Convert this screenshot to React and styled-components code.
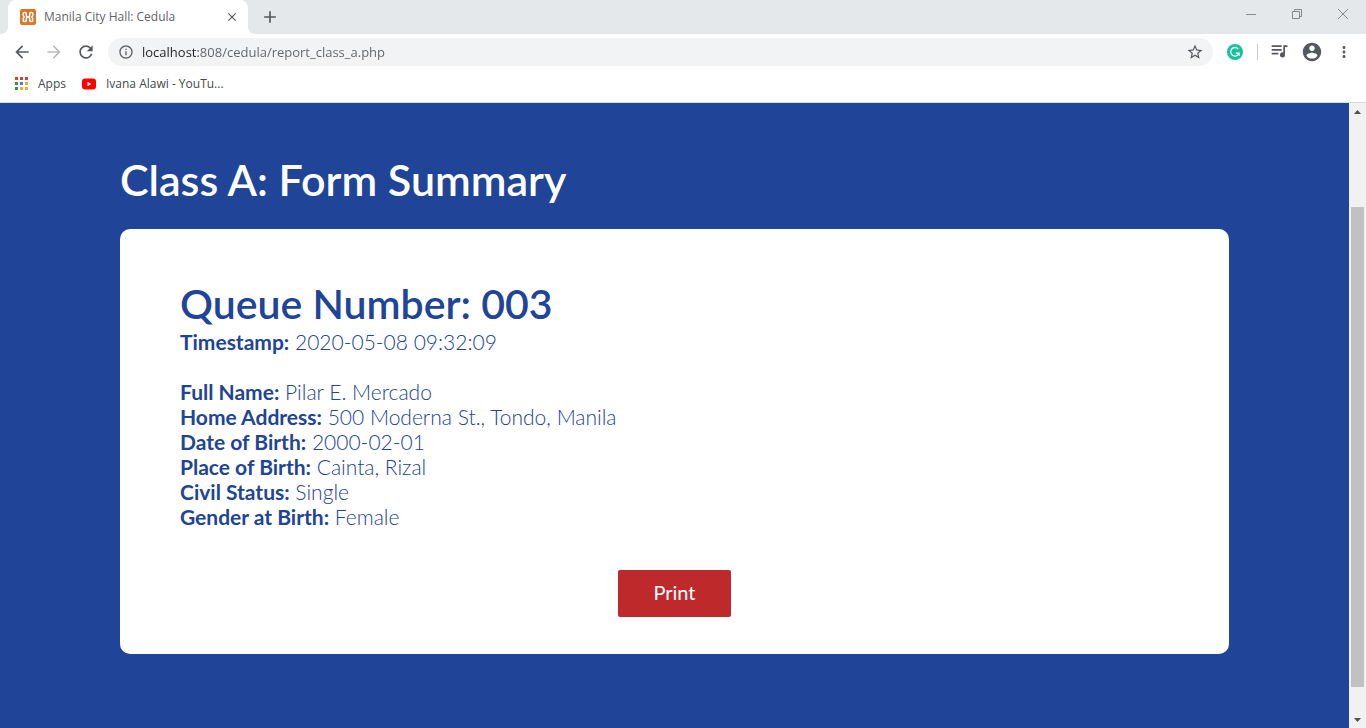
import React from "react";
import styled, { createGlobalStyle } from "styled-components";
import {
  MdArrowBack,
  MdArrowForward,
  MdRefresh,
  MdInfoOutline,
  MdStarBorder,
  MdMoreVert,
  MdClose,
  MdAdd,
} from "react-icons/md";

const GlobalStyle = createGlobalStyle`
  *, *::before, *::after { box-sizing: border-box; }
  body { margin: 0; }
  button { border: 0; padding: 0; background: none; font: inherit; color: inherit; cursor: pointer; }
`;

const Browser = styled.div`
  display: flex;
  flex-direction: column;
  min-height: 100vh;
  background: #fff;
  color: #5f6368;
  font: 12px/16px "Open Sans", "Noto Sans", sans-serif;
`;

const TabStrip = styled.div`
  display: flex;
  align-items: center;
  height: 34px;
  padding-left: 8px;
  background: #e5e8eb;
`;

const Tab = styled.div`
  position: relative;
  display: flex;
  align-items: center;
  width: 240px;
  height: 34px;
  padding: 0 9px 0 12px;
  background: #fff;
  border-radius: 8px 8px 0 0;

  &::before,
  &::after {
    content: "";
    position: absolute;
    bottom: 0;
    width: 8px;
    height: 8px;
  }
  &::before {
    right: 100%;
    background: radial-gradient(circle at 0 0, transparent 8px, #fff 8px);
  }
  &::after {
    left: 100%;
    background: radial-gradient(circle at 100% 0, transparent 8px, #fff 8px);
  }
`;

const TabTitle = styled.span`
  flex: 1;
  margin-left: 8px;
  white-space: nowrap;
`;

const IconButton = styled.button`
  display: flex;
  align-items: center;
  justify-content: center;
  flex: none;
  width: ${(p) => p.$width || 32}px;
  height: ${(p) => p.$height || 32}px;
  color: ${(p) => p.$color || "#55585c"};
`;

const WindowControls = styled.div`
  display: flex;
  height: 34px;
  margin-left: auto;
`;

const Toolbar = styled.div`
  display: flex;
  align-items: center;
  height: 36px;
  padding: 0 6px;
`;

const AddressBar = styled.label`
  display: flex;
  align-items: center;
  flex: 1;
  height: 28px;
  margin: 0 6px;
  padding: 0 2px 0 10px;
  border-radius: 14px;
  background: #f1f3f4;
`;

const AddressInput = styled.input`
  flex: 1;
  min-width: 0;
  height: 20px;
  margin-left: 8px;
  padding: 0;
  border: 0;
  outline: 0;
  font: 13px/20px "Open Sans", "Noto Sans", sans-serif;
  color: #5f6368;
  background: linear-gradient(to right, #202124 56px, #5f6368 56px);
  background-clip: text;
  -webkit-text-fill-color: transparent;
`;

const Divider = styled.span`
  width: 1px;
  height: 16px;
  margin: 0 6px;
  background: #c8cacd;
`;

const Bookmarks = styled.nav`
  display: flex;
  align-items: center;
  gap: 16px;
  height: 33px;
  padding: 0 14px 4px;
  border-bottom: 1px solid #d5dae3;
`;

const Bookmark = styled.a`
  display: flex;
  align-items: center;
  gap: 8px;
  color: #45484c;
  text-decoration: none;
`;

const Viewport = styled.div`
  display: flex;
  flex: 1;
`;

const Page = styled.main`
  flex: 1;
  padding: 52px 120px 60px;
  background: #204497;
  color: #204497;
  font-family: Lato, sans-serif;
`;

const Title = styled.h1`
  margin: 0 0 24px;
  color: #fff;
  font-size: 43px;
  line-height: 50px;
  font-weight: 600;
`;

const Card = styled.section`
  padding: 50px 60px 37px;
  border-radius: 10px;
  background: #fff;
`;

const Queue = styled.h2`
  margin: 0;
  font-size: 41px;
  line-height: 50px;
  font-weight: 600;
`;

const Field = styled.p`
  margin: 0;
  font-size: 21px;
  line-height: 25px;
  font-weight: 300;

  strong {
    font-weight: 700;
  }
`;

const Details = styled.div`
  margin: 25px 0 41px;
`;

const PrintButton = styled.button`
  && {
    display: block;
    margin: 0 auto;
    padding: 10px 35px 12px;
    border-radius: 2px;
    background: #be2a2b;
    color: #fff;
    font-size: 20px;
    line-height: 25px;
  }
`;

const Scrollbar = styled.div`
  display: flex;
  flex-direction: column;
  width: 17px;
  background: #f1f1f1;
`;

const Track = styled.div`
  display: flex;
  flex-direction: column;
  flex: 1;
  padding: 0 2px;

  &::before {
    content: "";
    flex: 87;
  }
  &::after {
    content: "";
    flex: 24;
  }
`;

const Thumb = styled.div`
  flex: 480;
  background: #c1c1c1;
`;

const FormIcon = () => (
  <svg width="16" height="16" viewBox="0 0 16 16" aria-hidden="true">
    <rect width="16" height="16" rx="2" fill="#e0742b" />
    <path
      d="M6.300 6.500V4.800Q6.300 3.600 5.100 3.600H4.400Q3.200 3.600 3.200 4.800V5.900Q3.200 7 4.300 8Q3.200 9 3.200 10.100V11.200Q3.200 12.400 4.400 12.400H5.100Q6.300 12.400 6.300 11.200V9.500Q6.300 8 8 8Q9.700 8 9.700 9.500V11.200Q9.700 12.400 10.900 12.400H11.600Q12.800 12.400 12.800 11.200V10.100Q12.800 9 11.700 8Q12.800 7 12.800 5.900V4.800Q12.800 3.600 11.600 3.600H10.900Q9.700 3.600 9.700 4.800V6.500Q9.700 8 8 8Q6.300 8 6.300 6.500Z"
      fill="none"
      stroke="#fff"
      strokeWidth="1.500"
      strokeLinejoin="round"
    />
  </svg>
);

const dots = ["#d93f35", "#d93f35", "#d93f35", "#35924a", "#3b7de0", "#e8b223", "#35924a", "#e8b223", "#e8b223"];
const AppsIcon = () => (
  <svg width="16" height="14" viewBox="0 0 16 14" aria-hidden="true">
    {dots.map((fill, i) => (
      <rect key={i} x={1 + (i % 3) * 5} y={(Math.floor(i / 3)) * 5} width="3" height="3" fill={fill} />
    ))}
  </svg>
);

const VideoIcon = () => (
  <svg width="16" height="16" viewBox="0 0 16 16" aria-hidden="true">
    <rect x="0" y="2.500" width="14" height="11" rx="3" fill="#f00" />
    <path d="M5.500 5.800v4.400L9.200 8Z" fill="#fff" />
  </svg>
);

const GrammarIcon = () => (
  <svg width="16" height="16" viewBox="0 0 16 16" aria-hidden="true">
    <circle cx="8" cy="8" r="8" fill="#15c39a" />
    <path d="M11.300 5.100A4.300 4.300 0 1 0 12 9.200H8.800M12.100 8.700v3" fill="none" stroke="#fff" strokeWidth="1.300" />
  </svg>
);

const QueueMusicIcon = () => (
  <svg width="20" height="20" viewBox="0 0 24 24" fill="currentColor" aria-hidden="true">
    <path d="M2 4h12v2H2ZM2 8.500h12v2H2ZM2 13h8v2H2ZM16 4h5v2h-3v9.500a3 3 0 1 1-2-2.830Z" />
  </svg>
);

const ProfileIcon = () => (
  <svg width="22" height="22" viewBox="0 0 24 24" fill="currentColor" aria-hidden="true">
    <path d="M12 2C6.480 2 2 6.480 2 12s4.480 10 10 10 10-4.480 10-10S17.520 2 12 2zm0 3c1.660 0 3 1.340 3 3s-1.340 3-3 3-3-1.340-3-3 1.340-3 3-3zm0 14.200c-2.500 0-4.710-1.280-6-3.220.03-1.990 4-3.080 6-3.080 1.990 0 5.970 1.090 6 3.080-1.290 1.940-3.500 3.220-6 3.220z" />
  </svg>
);

const WindowIcon = ({ d }) => (
  <svg width="12" height="12" viewBox="0 0 12 12" aria-hidden="true">
    <path d={d} fill="none" stroke="#85888c" />
  </svg>
);

const Arrow = ({ d }) => (
  <svg width="7" height="4" viewBox="0 0 7 4" aria-hidden="true">
    <path d={d} fill="#505050" />
  </svg>
);

const details = [
  ["Full Name", "Pilar E. Mercado"],
  ["Home Address", "500 Moderna St., Tondo, Manila"],
  ["Date of Birth", "2000-02-01"],
  ["Place of Birth", "Cainta, Rizal"],
  ["Civil Status", "Single"],
  ["Gender at Birth", "Female"],
];

export default function App() {
  return (
    <Browser>
      <GlobalStyle />
      <TabStrip>
        <Tab>
          <FormIcon />
          <TabTitle>Manila City Hall: Cedula</TabTitle>
          <IconButton aria-label="Close tab" $width={14}>
            <MdClose size={14} />
          </IconButton>
        </Tab>
        <IconButton aria-label="New tab" $width={44}>
          <MdAdd size={20} />
        </IconButton>
        <WindowControls>
          <IconButton aria-label="Minimize" $width={46} $height={28}>
            <WindowIcon d="M1 6.5h10" />
          </IconButton>
          <IconButton aria-label="Restore" $width={46} $height={28}>
            <WindowIcon d="M1.500 3.500h7v7h-7ZM3.500 3V1.500h7v7H9" />
          </IconButton>
          <IconButton aria-label="Close window" $width={46} $height={28}>
            <WindowIcon d="M1 1l10 10M11 1L1 11" />
          </IconButton>
        </WindowControls>
      </TabStrip>
      <Toolbar>
        <IconButton aria-label="Back"><MdArrowBack size={20} /></IconButton>
        <IconButton aria-label="Forward" $color="#babcbe"><MdArrowForward size={20} /></IconButton>
        <IconButton aria-label="Reload"><MdRefresh size={20} /></IconButton>
        <AddressBar>
          <MdInfoOutline size={16} />
          <AddressInput aria-label="Address" defaultValue="localhost:808/cedula/report_class_a.php" />
          <IconButton type="button" aria-label="Bookmark this page">
            <MdStarBorder size={18} />
          </IconButton>
        </AddressBar>
        <IconButton aria-label="Writing assistant"><GrammarIcon /></IconButton>
        <Divider />
        <IconButton aria-label="Media controls"><QueueMusicIcon /></IconButton>
        <IconButton aria-label="Profile"><ProfileIcon /></IconButton>
        <IconButton aria-label="Menu"><MdMoreVert size={18} /></IconButton>
      </Toolbar>
      <Bookmarks>
        <Bookmark href="#apps"><AppsIcon />Apps</Bookmark>
        <Bookmark href="#video"><VideoIcon />Ivana Alawi - YouTu...</Bookmark>
      </Bookmarks>
      <Viewport>
        <Page>
          <Title>Class A: Form Summary</Title>
          <Card>
            <Queue>Queue Number: 003</Queue>
            <Field><strong>Timestamp:</strong> 2020-05-08 09:32:09</Field>
            <Details>
              {details.map(([label, value]) => (
                <Field key={label}><strong>{label}:</strong> {value}</Field>
              ))}
            </Details>
            <PrintButton>Print</PrintButton>
          </Card>
        </Page>
        <Scrollbar>
          <IconButton aria-label="Scroll up" $width={17} $height={17}><Arrow d="M3.500 0 7 4H0Z" /></IconButton>
          <Track><Thumb /></Track>
          <IconButton aria-label="Scroll down" $width={17} $height={17}><Arrow d="M0 0h7L3.500 4Z" /></IconButton>
        </Scrollbar>
      </Viewport>
    </Browser>
  );
}
